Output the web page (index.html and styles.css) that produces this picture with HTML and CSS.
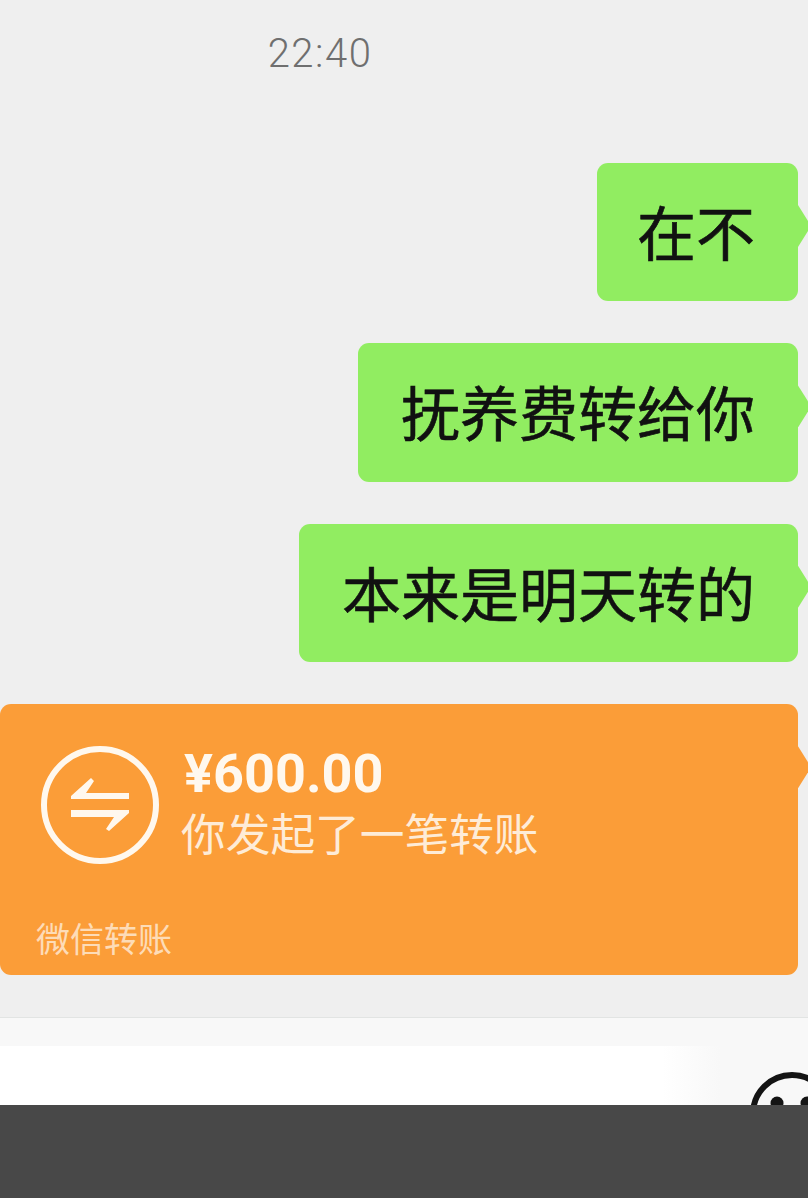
FILE: index.html
```html
<!DOCTYPE html>
<html lang="zh-CN">
<head>
<meta charset="utf-8">
<title>聊天</title>
<link rel="stylesheet" href="styles.css">
</head>
<body>
<main class="screen">
  <section class="chat">
    <div class="time">22:40</div>
    <div class="msg msg-short">在不</div>
    <div class="msg">抚养费转给你</div>
    <div class="msg">本来是明天转的</div>
    <div class="transfer">
      <div class="transfer-main">
        <svg class="transfer-icon" viewBox="0 0 118 118" aria-hidden="true">
          <circle cx="59" cy="59" r="56" fill="none" stroke="#fff8ee" stroke-width="6"/>
          <path d="M30 53H88V47H45L53 35L50 32L30 50Z" fill="#fff8ee"/>
          <path d="M30 64H88V67L68 85L65 83L73 71H30Z" fill="#fff8ee"/>
        </svg>
        <div class="transfer-text">
          <div class="amount">¥600.00</div>
          <div class="note">你发起了一笔转账</div>
        </div>
      </div>
      <div class="transfer-foot">微信转账</div>
    </div>
  </section>
  <section class="input-area">
    <div class="input-box"></div>
    <svg class="smiley" viewBox="0 0 90 90" aria-hidden="true">
      <circle cx="45" cy="45" r="39" fill="none" stroke="#141414" stroke-width="6"/>
      <circle cx="30" cy="34" r="6.500" fill="#141414"/>
      <circle cx="60" cy="34" r="6.500" fill="#141414"/>
    </svg>
  </section>
  <div class="bar"></div>
</main>
</body>
</html>
```

FILE: styles.css
```css
* {
  box-sizing: border-box;
}

html,
body {
  margin: 0;
  padding: 0;
}

body {
  background: #484848;
  font-family: "Noto Sans CJK SC", "Noto Sans", sans-serif;
}

.screen {
  width: 808px;
  height: 1198px;
  overflow: hidden;
  display: flex;
  flex-direction: column;
}

.chat {
  height: 1018px;
  padding: 0 10px 0 0;
  background: #efefef;
  border-bottom: 1px solid #e2e4e3;
  display: flex;
  flex-direction: column;
  align-items: flex-end;
  gap: 42px;
}

.time {
  align-self: flex-start;
  width: 640px;
  height: 121px;
  padding-top: 27px;
  text-align: center;
  font-family: Roboto, "Noto Sans", sans-serif;
  font-weight: 300;
  font-size: 40px;
  line-height: 54px;
  letter-spacing: 1.500px;
  color: #6f6f6f;
}

.msg,
.transfer {
  position: relative;
  border-radius: 11px;
}

.msg::after,
.transfer::after {
  content: "";
  position: absolute;
  top: 42px;
  right: -10px;
  width: 10px;
  height: 42px;
  clip-path: polygon(0 0, 100% 38%, 100% 62%, 0 100%);
}

.msg {
  height: 138.400px;
  padding: 0 43px;
  background: #91ed61;
  color: #111;
  font-size: 59px;
  -webkit-text-stroke: 0.6px #111;
  line-height: 136px;
  white-space: nowrap;
}

.msg-short {
  padding-left: 40px;
}

.msg::after {
  background: #91ed61;
}

.transfer {
  width: 798px;
  height: 270.800px;
  padding: 42px 0 0 41px;
  background: #fb9d38;
  color: #fff8ee;
}

.transfer::after {
  background: #fb9d38;
}

.transfer-main {
  display: flex;
  gap: 23px;
}

.transfer-icon {
  flex: none;
  width: 118px;
  height: 118px;
}

.transfer-text {
  margin-left: -1px;
}

.amount {
  margin: -3px 0 0 3px;
  font-family: Roboto, "Noto Sans", sans-serif;
  font-weight: 700;
  font-size: 54px;
  line-height: 62px;
}

.note {
  margin-top: 1px;
  font-size: 44.700px;
  line-height: 52px;
  white-space: nowrap;
  opacity: 0.88;
}

.transfer-foot {
  margin: 52px 0 0 -5px;
  font-size: 34px;
  line-height: 44px;
  opacity: 0.7;
}

.input-area {
  height: 87px;
  overflow: hidden;
  background: #f8f8f8;
  padding-top: 28px;
  display: flex;
  align-items: flex-start;
  justify-content: space-between;
}

.input-box {
  width: 720px;
  height: 59px;
  background: linear-gradient(to right, #fff 92%, #f8f8f8);
}

.smiley {
  flex: none;
  width: 90px;
  height: 90px;
  margin: 23px -29px 0 0;
}

.bar {
  flex: 1;
  background: #484848;
}
```
